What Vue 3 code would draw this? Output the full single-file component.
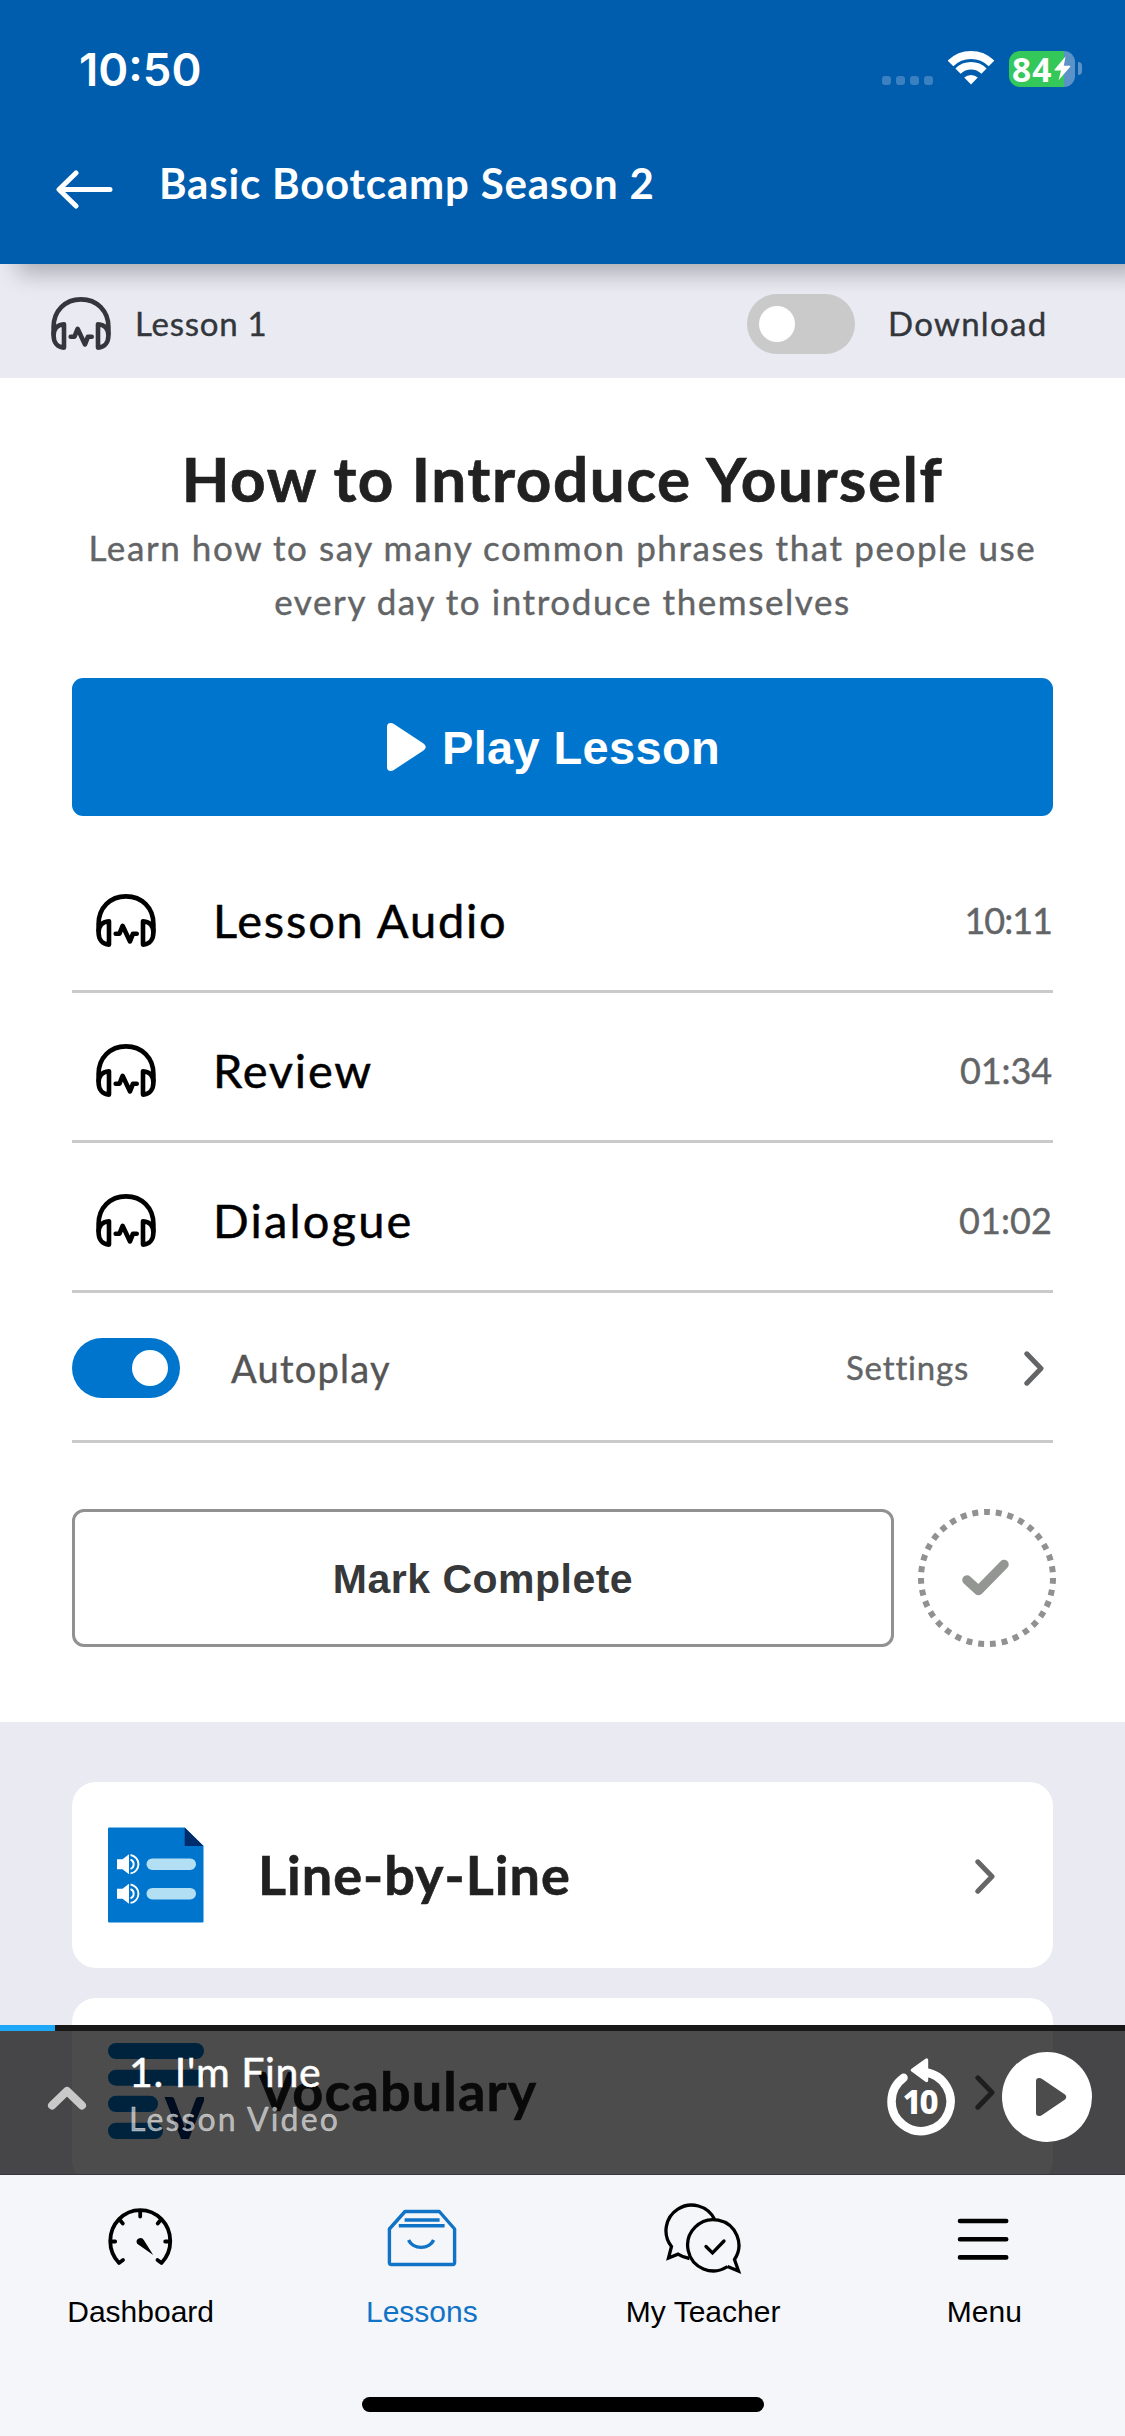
<script setup>
import { h } from 'vue'

const Headphones = () =>
  h('svg', { viewBox: '0 0 60 53', width: 60, height: 53, fill: 'none', stroke: 'currentColor', 'stroke-width': 4.6, 'stroke-linecap': 'round', 'stroke-linejoin': 'round' }, [
    h('path', { d: 'M2.6 37V30C2.6 14 14 2.4 30 2.4S57.4 14 57.4 30V37' }),
    h('path', { d: 'M13 27.2V50.6C6 50.3 2.6 45 2.6 38.5S6 27.8 13 27.2Z' }),
    h('path', { d: 'M47 27.2V50.6C54 50.3 57.4 45 57.4 38.5S54 27.8 47 27.2Z' }),
    h('path', { d: 'M19.7 39.7H23.5L26.6 31.8L34 47.4L37 39.7H40.7' }),
  ])

const Chevron = () =>
  h('svg', { viewBox: '0 0 20 35', width: 20, height: 35, fill: 'none', stroke: 'currentColor', 'stroke-width': 5, 'stroke-linecap': 'round', 'stroke-linejoin': 'round' }, [
    h('path', { d: 'M2.8 2.8L17 17.5L2.8 32.2' }),
  ])

const tracks = [
  { title: 'Lesson Audio', time: '10:11', track: 1.8, tight: -1 },
  { title: 'Review', time: '01:34', track: 1.8, tight: -0.1 },
  { title: 'Dialogue', time: '01:02', track: 2.2, tight: 0.1 },
]
</script>

<template>
  <div class="screen">
    <header class="header">
      <div class="status">
        <span class="clock">10:50</span>
        <div class="signals">
          <div class="dots"><i></i><i></i><i></i><i></i></div>
          <svg class="wifi" width="46" height="35" viewBox="0 0 46 35" fill="none" stroke="#fff">
            <path d="M2.5 12.5A29 29 0 0 1 43.5 12.5" stroke-width="8" />
            <path d="M10 20.2A18.4 18.4 0 0 1 36 20.2" stroke-width="7.4" />
            <path d="M23 33.6L16.2 26.6A10 10 0 0 1 29.8 26.6Z" fill="#fff" stroke="none" />
          </svg>
          <div class="battery">
            <div class="cell">
              <span>84</span>
              <svg width="17" height="25" viewBox="0 0 17 25"><path d="M11.5 .5L.6 13.4Q0 14.4 1.2 14.4H7L4.6 24.2L16.2 10.8Q16.8 9.8 15.6 9.8H9.8Z" fill="#fff" /></svg>
            </div>
            <i class="nub"></i>
          </div>
        </div>
      </div>
      <div class="titlebar">
        <svg width="57" height="40" viewBox="0 0 57 40" fill="none" stroke="#fff" stroke-width="5" stroke-linecap="round" stroke-linejoin="round"><path d="M20 3L3 19.500L20 36M3.500 19.500H54" /></svg>
        <h1>Basic Bootcamp Season 2</h1>
      </div>
    </header>

    <div class="content">
      <div class="subbar">
        <Headphones />
        <span class="lesson-no">Lesson 1</span>
        <span class="toggle"><i></i></span>
        <span class="download">Download</span>
      </div>

      <section class="lesson">
        <h2>How to Introduce Yourself</h2>
        <p class="desc">Learn how to say many common phrases that people use every day to introduce themselves</p>
        <button class="play">
          <svg width="41" height="50" viewBox="0 0 41 50"><path d="M1 5Q1 .8 5 1Q7 1.200 9 2.800L37.500 21.500Q42 25 37.500 28.500L9 47.200Q7 48.800 5 49Q1 49.200 1 45Z" fill="#fff" /></svg>
          <span>Play Lesson</span>
        </button>
        <div class="rows">
          <div v-for="t in tracks" :key="t.title" class="row">
            <Headphones class="hp" />
            <span class="name" :style="{ letterSpacing: t.track + 'px' }">{{ t.title }}</span>
            <span class="time" :style="{ letterSpacing: t.tight + 'px' }">{{ t.time }}</span>
          </div>
          <div class="row auto">
            <span class="toggle on"><i></i></span>
            <span class="autoplay">Autoplay</span>
            <span class="settings">Settings</span>
            <Chevron class="chev" />
          </div>
        </div>
        <div class="complete">
          <button class="mark"><span>Mark Complete</span></button>
          <svg width="138" height="138" viewBox="0 0 138 138" fill="none" stroke="#919191">
            <circle cx="69" cy="69" r="66" stroke-width="6" pathLength="70" stroke-dasharray="1 1" />
            <path d="M49 71L60.500 81.500L86 55.500" stroke="#949694" stroke-width="9.500" stroke-linecap="round" stroke-linejoin="round" />
          </svg>
        </div>
      </section>

      <section class="cards">
        <div class="card">
          <svg width="96" height="96" viewBox="0 0 96 96">
            <path d="M0 1.500Q0 .5 1 .5H76.700L95.500 19V94.500Q95.500 95.500 94.500 95.500H1Q0 95.500 0 94.500Z" fill="#0075ce" />
            <path d="M76.700 .5L95.500 19H76.700Z" fill="#002c6c" />
            <g v-for="y in [0, 29.5]" :key="y" :transform="`translate(0 ${y})`">
              <rect x="38.500" y="31.400" width="49.500" height="11.600" rx="5.800" fill="#b3dff4" />
              <path d="M9 32.200H14.500L21 27.200V47.200L14.500 42.200H9Z" fill="#fff" />
              <path d="M22.500 28A9.300 9.300 0 0 1 22.500 46.400M22.500 32.600A4.900 4.900 0 0 1 22.500 41.800" fill="none" stroke="#fff" stroke-width="1.900" />
            </g>
          </svg>
          <span class="card-title">Line-by-Line</span>
          <Chevron class="chev" />
        </div>
        <div class="card">
          <svg width="96" height="96" viewBox="0 0 96 96">
            <g fill="#0075ce">
              <rect width="96" height="16" rx="8" />
              <rect y="26.700" width="96" height="16" rx="8" />
              <rect y="52.700" width="50" height="16.300" rx="8" />
              <rect y="79.700" width="55" height="16.300" rx="8" />
            </g>
            <text x="77" y="95.500" text-anchor="middle" class="vee">V</text>
          </svg>
          <span class="card-title vocab">Vocabulary</span>
          <Chevron class="chev" />
        </div>
      </section>

      <div class="player">
        <div class="progress"><i></i></div>
        <div class="controls">
          <svg class="up" width="40" height="26" viewBox="0 0 40 26" fill="none" stroke="#c9c9c9" stroke-width="8" stroke-linecap="round" stroke-linejoin="round"><path d="M5 20.500L20 6L35 20.500" /></svg>
          <div class="meta">
            <span class="now">1. I'm Fine</span>
            <span class="kind">Lesson Video</span>
          </div>
          <svg class="rewind" width="68" height="78" viewBox="0 0 68 78">
            <path d="M38 14.300A29.500 29.500 0 1 1 16.500 19.800" fill="none" stroke="#fff" stroke-width="8.500" stroke-linecap="round" />
            <path d="M25.500 12.200L39.500 2V22.500Z" fill="#fff" stroke="#fff" stroke-width="3.400" stroke-linejoin="round" />
            <text x="32.500" y="56" text-anchor="middle">10</text>
          </svg>
          <div class="round">
            <svg width="31" height="40" viewBox="0 0 31 40"><path d="M0 4Q0 1 3 1Q5 1 6.500 2.200L29 17.500Q31.500 20 29 22.500L6.500 37.800Q5 39 3 39Q0 39 0 36Z" fill="#4c4c4c" /></svg>
          </div>
        </div>
      </div>
    </div>

    <nav class="tabs">
      <div class="items">
        <a>
          <svg width="80" height="80" viewBox="0 0 80 80" fill="none" stroke="#000" stroke-width="3.800" stroke-linecap="round" stroke-linejoin="round">
            <path d="M22 60L18 63A30 31 0 1 1 60.500 63L56.500 60" />
            <path d="M39.200 12V16.500M19.300 20.500L21.800 23.500M59.200 20.500L56.700 23.500M10.200 41.500H14.200M64.200 41.500H68" />
            <path d="M36.200 43.800A3.800 3.800 0 1 1 42.800 40L52.200 55Z" fill="#000" stroke="none" />
          </svg>
          <span>Dashboard</span>
        </a>
        <a class="active">
          <svg width="80" height="80" viewBox="0 0 80 80" fill="none" stroke="#1173c6" stroke-width="3.400" stroke-linejoin="round">
            <path d="M7.400 29L23 11.500H57.300L72.600 29V62.500Q72.600 64.500 70.600 64.500H9.400Q7.400 64.500 7.400 62.500Z" />
            <path d="M22.600 20H57.600M16.800 25.800H62.600" />
            <path d="M26.600 40A13.200 10.800 0 0 0 51.600 40" />
          </svg>
          <span>Lessons</span>
        </a>
        <a>
          <svg width="80" height="80" viewBox="0 0 80 80" fill="none" stroke="#000" stroke-width="3.300" stroke-linejoin="miter">
            <path d="M51.500 19.200A25.600 25.600 0 1 0 8.500 46.500L5.500 58L15 54.200Q20 57.500 26.500 58.500" />
            <path d="M64.500 66.500A25.600 25.600 0 1 1 71.500 59.500L75.500 71L64.500 66.500" />
            <path d="M43 46.500L49.500 53L61 41" stroke-linecap="round" />
          </svg>
          <span>My Teacher</span>
        </a>
        <a>
          <svg width="80" height="80" viewBox="0 0 80 80" stroke="#000" stroke-width="4.600" stroke-linecap="round"><path d="M16 21H62.200M16 39.200H62.200M16 57.400H62.200" /></svg>
          <span>Menu</span>
        </a>
      </div>
      <div class="home"></div>
    </nav>
  </div>
</template>

<style>
body { margin: 0; background: #fff; }
</style>

<style scoped>
.screen { display: flex; flex-direction: column; width: 1125px; height: 2436px; overflow: hidden; background: #fff; font-family: Lato, sans-serif; }
h1, h2, p { margin: 0; }
svg { display: block; flex: none; }
button { font: inherit; padding: 0; box-sizing: border-box; }

.header { position: relative; z-index: 1; flex: none; height: 264px; background: #005cac; color: #fff; box-shadow: 18px 9px 22px rgba(0, 0, 0, .27); }
.status { display: flex; align-items: center; justify-content: space-between; height: 137px; padding: 0 43px 0 79px; }
.clock { font: 600 45.500px/60px Inter, sans-serif; margin-top: 2px; letter-spacing: 0; }
.signals { display: flex; align-items: center; }
.dots { display: flex; gap: 5px; margin: 24px 15px 0 0; }
.dots i { width: 9px; height: 9px; border-radius: 3px; background: #3b80c0; }
.wifi { margin-right: 15px; }
.battery { display: flex; align-items: center; gap: 3px; }
.cell { display: flex; align-items: center; width: 66px; height: 36px; border-radius: 11px; padding-left: 3px; box-sizing: border-box; background: linear-gradient(90deg, #34c759 55px, #5b93c9 55px); }
.cell span { width: 42px; font: 700 33.500px/36px "Noto Sans", sans-serif; letter-spacing: 1px; }
.nub { width: 4px; height: 13px; border-radius: 0 4px 4px 0; background: #5b93c9; }
.titlebar { display: flex; padding-left: 56px; }
.titlebar svg { margin-top: 33px; }
.titlebar h1 { margin: 21px 0 0 46px; font-size: 42px; line-height: 50px; font-weight: 700; letter-spacing: .8px; }

.content { position: relative; flex: 1; min-height: 0; overflow: hidden; display: flex; flex-direction: column; background: #e9eaf2; }
.subbar { display: flex; align-items: center; flex: none; height: 114px; padding: 4px 0 0 51px; box-sizing: border-box; color: #33363b; font-size: 33px; -webkit-text-stroke: .4px; }
.lesson-no { margin: -1px 0 0 24px; letter-spacing: .75px; }
.toggle { display: flex; align-items: center; width: 108px; height: 60px; padding: 0 12px; box-sizing: border-box; border-radius: 30px; background: #cacaca; }
.toggle i { width: 36px; height: 36px; border-radius: 50%; background: #fff; }
.toggle.on { justify-content: flex-end; background: #0075ce; }
.subbar .toggle { margin: 2px 33px 0 auto; }
.download { width: 237px; margin-top: -1px; letter-spacing: 1.3px; }

.lesson { flex: none; height: 1344px; box-sizing: border-box; padding: 65px 72px 0; background: #fff; }
h2 { font-size: 62px; line-height: 70px; font-weight: 700; letter-spacing: 1.58px; text-align: center; color: #212121; white-space: nowrap; -webkit-text-stroke: .7px; }
.desc { margin-top: 7px; font-size: 35px; line-height: 54px; letter-spacing: 1.58px; text-align: center; color: #626466; -webkit-text-stroke: .4px; }
.play { display: flex; align-items: center; justify-content: center; gap: 15px; width: 981px; height: 138px; margin-top: 50px; padding-right: 19px; border: 0; border-radius: 11px; background: #0075ce; color: #fff; font: 700 47px/56px "Liberation Sans", sans-serif; letter-spacing: .34px; }
.play span { margin-top: 2px; }
.rows { margin-top: 27px; }
.row { display: flex; align-items: center; height: 150px; box-sizing: border-box; padding-top: 3px; border-bottom: 3px solid #cacaca; }
.hp { margin: 4px 57px 0 24px; }
.name { margin-top: 3px; font-size: 47px; color: #000; -webkit-text-stroke: .5px; }
.time { margin: 3px 1px 0 auto; font-size: 36px; color: #626466; -webkit-text-stroke: .4px; }
.auto { color: #626466; }
.autoplay { margin-left: 51px; font-size: 38px; letter-spacing: 1.25px; color: #555; -webkit-text-stroke: .4px; }
.settings { width: 178px; margin: -2px 0 0 auto; font-size: 33px; letter-spacing: .82px; -webkit-text-stroke: .4px; }
.auto .chev { margin: 1px 9px 0 0; }
.complete { display: flex; gap: 24px; margin-top: 66px; }
.mark { display: flex; align-items: center; justify-content: center; flex: none; width: 822px; height: 138px; border: 3px solid #919191; border-radius: 12px; background: #fff; color: #363839; font: 700 41px/50px "Liberation Sans", sans-serif; letter-spacing: .49px; }
.mark span { margin-top: 2px; }

.cards { flex: none; display: flex; flex-direction: column; gap: 30px; padding: 60px 72px; }
.card { display: flex; align-items: center; height: 186px; box-sizing: border-box; padding: 0 58px 0 36px; border-radius: 24px; background: #fff; color: #666; }
.card-title { margin: -2px 0 0 54px; font-size: 54px; font-weight: 700; letter-spacing: 1px; color: #212121; -webkit-text-stroke: .6px; }
.vocab { letter-spacing: 1.1px; }
.card .chev { margin: 2px 0 0 auto; }
.vee { font: 900 57px Lato, sans-serif; fill: #002c6c; }

.player { position: absolute; left: 0; right: 0; bottom: 0; height: 149px; }
.progress { height: 6px; background: #181818; }
.progress i { display: block; width: 55px; height: 6px; background: #20a8f8; }
.controls { display: flex; height: 143px; background: rgba(0, 0, 0, .7); color: #fff; }
.up { margin: 54px 0 0 47px; }
.meta { display: flex; flex-direction: column; margin: 17px auto 0 42px; line-height: 47px; }
.now { font-size: 41px; letter-spacing: .62px; -webkit-text-stroke: .5px; }
.kind { font-size: 32px; letter-spacing: 2.15px; color: rgba(255, 255, 255, .6); -webkit-text-stroke: .4px; }
.rewind { margin: 27px 47px 0 0; }
.rewind text { font: 800 33px "Noto Sans", sans-serif; letter-spacing: -2px; fill: #fff; }
.round { display: flex; align-items: center; width: 90px; height: 90px; margin: 21px 33px 0 0; padding-left: 34px; box-sizing: border-box; border-radius: 50%; background: #fff; }

.tabs { flex: none; height: 262px; box-sizing: border-box; border-top: 1px solid #38383c; padding-top: 25px; background: #f4f6fa; }
.items { display: flex; }
.items a { display: flex; flex: 1; flex-direction: column; align-items: center; gap: 14px; color: #000; font: 400 30px/36px "Liberation Sans", sans-serif; letter-spacing: 0; }
.items a.active { color: #1173c6; }
.home { width: 402px; height: 15px; margin: 67px auto 0; border-radius: 8px; background: #000; }
</style>
